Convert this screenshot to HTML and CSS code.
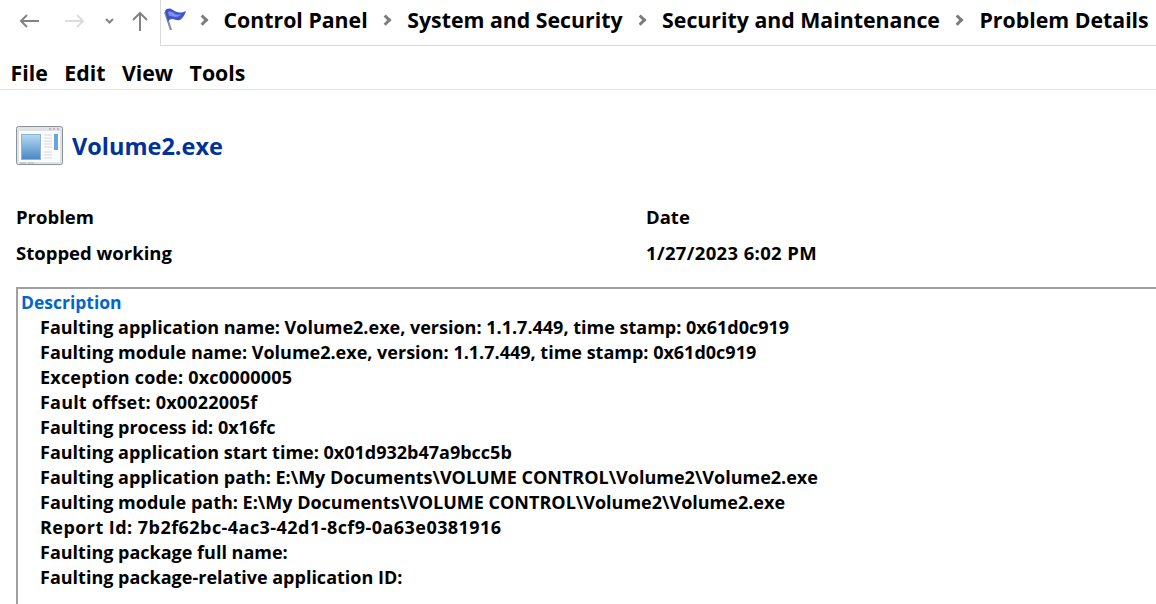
FILE: index.html
```html
<!DOCTYPE html>
<html lang="en">
<head>
    <meta charset="UTF-8">
    <meta name="viewport" content="width=device-width, initial-scale=1.0">
    <title>Problem Details</title>
    <link rel="stylesheet" href="styles.css">
</head>
<body>

<div class="toolbar">
    <div class="nav-buttons">
        <svg class="nav-back" width="20" height="14" viewBox="0 0 20 14"><path d="M20 7H2M8 1L2 7l6 6" fill="none" stroke="#838383" stroke-width="2"/></svg>
        <svg class="nav-forward" width="20" height="14" viewBox="0 0 20 14"><path d="M0 7h18M12 1l6 6-6 6" fill="none" stroke="#dcdcdc" stroke-width="2"/></svg>
        <svg class="nav-down" width="9" height="6" viewBox="0 0 9 6"><path d="M1 1l3.500 3.500L8 1" fill="none" stroke="#838383" stroke-width="2"/></svg>
        <svg class="nav-up" width="16" height="20" viewBox="0 0 16 20"><path d="M8 20V2M1 9l7-7 7 7" fill="none" stroke="#838383" stroke-width="2"/></svg>
    </div>
    <div class="address">
        <svg class="flag" width="25" height="23" viewBox="0 0 25 23">
            <path d="M2 4l6 18" stroke="#8a8f96" stroke-width="2.200" fill="none"/>
            <path d="M2 3C4 0 7 0 10 2c3 2 7 4 13 1-1 3-3 7-6 9-3 1-5-1-8-1-2 0-3 1-4 3z" fill="#3d55cf"/>
            <path d="M5 4c3-1 5 0 7 2 2 1 4 1 6 0-1 2-3 3-5 3-3 0-5-2-7-1z" fill="#7d92ea"/>
        </svg>
        <span class="chevron first"></span>
        <span class="crumb">Control Panel</span>
        <span class="chevron"></span>
        <span class="crumb">System and Security</span>
        <span class="chevron"></span>
        <span class="crumb">Security and Maintenance</span>
        <span class="chevron"></span>
        <span class="crumb">Problem Details</span>
    </div>
</div>

<div class="menu">
    <span>File</span>
    <span>Edit</span>
    <span>View</span>
    <span>Tools</span>
</div>

<div class="content">
    <div class="app-title">
        <svg width="47" height="39" viewBox="0 0 47 39">
            <defs>
                <linearGradient id="pane" x1="0" y1="0" x2="0" y2="1">
                    <stop offset="0" stop-color="#b4daf4"/>
                    <stop offset="1" stop-color="#4a86c4"/>
                </linearGradient>
            </defs>
            <rect x="0.500" y="0.500" width="46" height="38" rx="2" fill="#dfe3e8" stroke="#8d9299"/>
            <rect x="3" y="5" width="41" height="31" fill="#fbfcfd"/>
            <path d="M33 3h2M37 3h2M41 3h2" stroke="#8d9299"/>
            <rect x="5.500" y="8.500" width="19" height="25" fill="url(#pane)" stroke="#8fb2d4"/>
            <path d="M28 9h8M28 12h8M28 15h8M28 18h8M28 21h8M28 26h8M28 29h8M28 32h8" stroke="#d4d6d9"/>
            <rect x="38" y="8" width="4" height="16" fill="#6ea4d8"/>
            <path d="M4 37h6M12 37h6" stroke="#b0b4b9"/>
        </svg>
        <h1>Volume2.exe</h1>
    </div>

    <div class="summary">
        <div>Problem</div>
        <div>Date</div>
        <div>Stopped working</div>
        <div class="date">1/27/2023 6:02 PM</div>
    </div>

    <div class="details">
        <h3>Description</h3>
        <ul>
            <li>Faulting application name: Volume2.exe, version: 1.1.7.449, time stamp: 0x61d0c919</li>
            <li>Faulting module name: Volume2.exe, version: 1.1.7.449, time stamp: 0x61d0c919</li>
            <li class="code">Exception code: 0xc0000005</li>
            <li class="code">Fault offset: 0x0022005f</li>
            <li>Faulting process id: 0x16fc</li>
            <li>Faulting application start time: 0x01d932b47a9bcc5b</li>
            <li>Faulting application path: E:\My Documents\VOLUME CONTROL\Volume2\Volume2.exe</li>
            <li>Faulting module path: E:\My Documents\VOLUME CONTROL\Volume2\Volume2.exe</li>
            <li class="report-id">Report Id: 7b2f62bc-4ac3-42d1-8cf9-0a63e0381916</li>
            <li>Faulting package full name:</li>
            <li>Faulting package-relative application ID:</li>
        </ul>
    </div>
</div>

</body>
</html>
```

FILE: styles.css
```css
html, body {
    height: 100%;
}
body {
    font-family: "Open Sans", sans-serif;
    font-weight: 700;
    font-size: 18px;
    margin: 0;
    color: #000;
    background-color: #fff;
    overflow: hidden;
}
.toolbar {
    display: flex;
    height: 46px;
}
.nav-buttons {
    width: 160px;
    flex-shrink: 0;
    display: flex;
    align-items: center;
    padding: 0 0 5px 19px;
    box-sizing: border-box;
}
.nav-back {
    margin-right: 26px;
}
.nav-forward {
    margin-right: 20px;
}
.nav-down {
    margin-right: 18px;
}
.address {
    flex: 1;
    display: flex;
    align-items: center;
    border-left: 1px solid #d9d9d9;
    border-bottom: 1px solid #d9d9d9;
    white-space: nowrap;
    overflow: hidden;
    font-size: 21.300px;
    padding-bottom: 6px;
}
.flag {
    flex-shrink: 0;
    margin-left: 2px;
}
.chevron {
    width: 7.500px;
    height: 7.500px;
    box-sizing: border-box;
    border-top: 3px solid #7c7c7c;
    border-right: 3px solid #7c7c7c;
    transform: rotate(45deg);
    flex-shrink: 0;
    margin: 0 18px 0 14px;
}
.chevron.first {
    margin-left: 11px;
    margin-right: 17px;
}
.menu {
    display: flex;
    gap: 16.500px;
    height: 44px;
    align-items: center;
    padding: 10px 0 0 10.500px;
    box-sizing: border-box;
    font-size: 21.300px;
    border-bottom: 1px solid #e0e0e0;
}
.content {
    padding-left: 16px;
}
.app-title {
    display: flex;
    align-items: center;
    gap: 9px;
    margin-top: 36px;
}
h1 {
    font-size: 23.500px;
    font-weight: 700;
    color: #003399;
    margin: 0;
}
.summary {
    display: grid;
    grid-template-columns: 630px 1fr;
    grid-auto-rows: 36px;
    align-items: center;
    margin-top: 33px;
    font-size: 18.500px;
}
.date {
    letter-spacing: 0.350px;
}
.details {
    margin-top: 17px;
    border: 2px solid #a0a0a0;
    border-right: none;
    border-bottom: none;
    padding: 1px 0 0 3px;
    height: 320px;
}
h3 {
    font-size: 17.500px;
    font-weight: 700;
    color: #0066cc;
    margin: 0;
    line-height: 25px;
}
ul {
    list-style: none;
    margin: 0;
    padding: 0 0 0 19px;
}
li {
    line-height: 25px;
}
.code {
    letter-spacing: 0.200px;
}
.report-id {
    letter-spacing: 0.450px;
}
```
